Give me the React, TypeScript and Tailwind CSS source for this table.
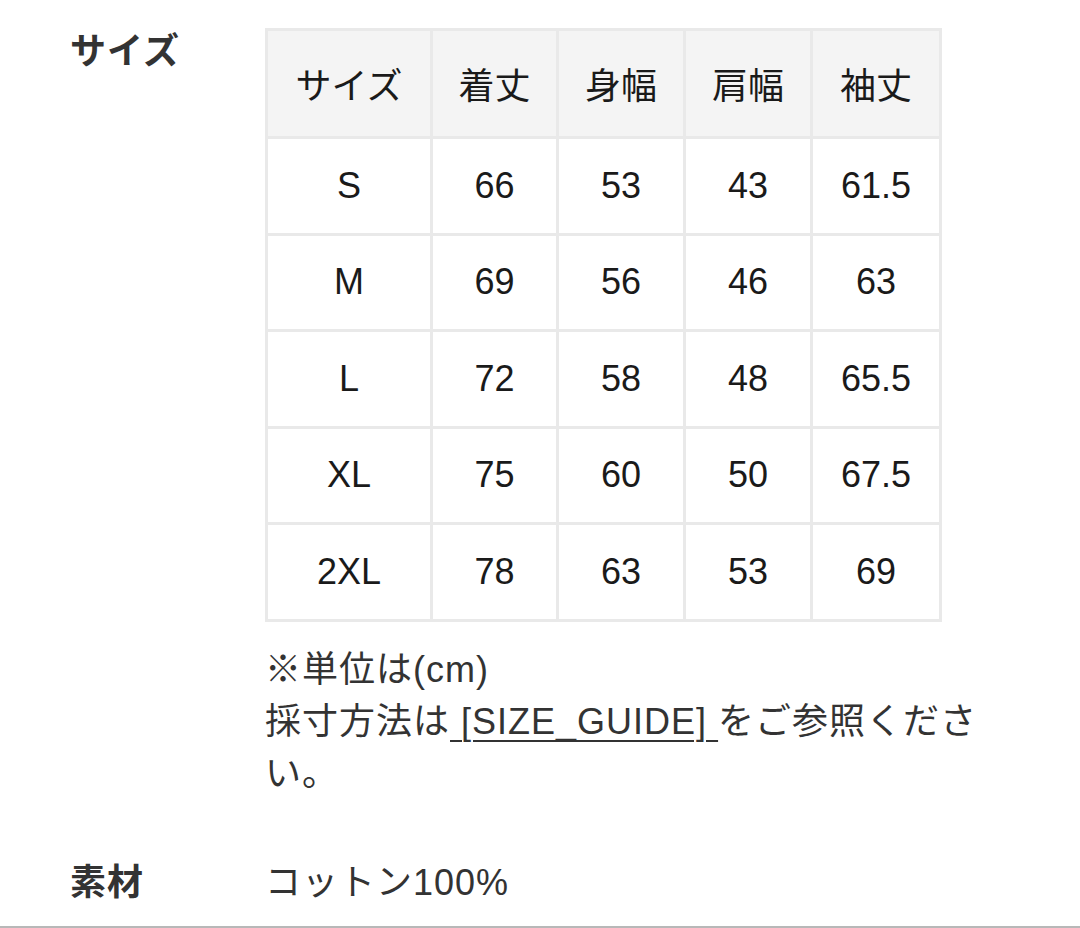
import React from "react";

const headers = ["サイズ", "着丈", "身幅", "肩幅", "袖丈"];
const rows = [
  ["S", "66", "53", "43", "61.5"],
  ["M", "69", "56", "46", "63"],
  ["L", "72", "58", "48", "65.5"],
  ["XL", "75", "60", "50", "67.5"],
  ["2XL", "78", "63", "53", "69"],
];
const widths = ["w-[165px]", "w-[126px]", "w-[127px]", "w-[127px]", "w-[129px]"];

export default function App() {
  return (
    <div
      className="w-[1080px] h-[928px] bg-white overflow-hidden flex flex-col"
      style={{ fontFamily: '"Liberation Sans", "Noto Sans CJK JP", sans-serif' }}
    >
      <div className="flex pt-[28px] pl-[70px]">
        <div className="w-[195px] shrink-0 text-[36px] leading-[48px] font-bold text-[#333] tracking-[1px]">サイズ</div>
        <div className="flex flex-col">
          <table className="table-fixed border-collapse w-[674px] text-[36px] text-[#1a1a1a]">
            <colgroup>
              {widths.map((w, i) => (
                <col key={i} className={w} />
              ))}
            </colgroup>
            <thead>
              <tr className="h-[108px] bg-[#f4f4f4]">
                {headers.map((h) => (
                  <th key={h} className="border-[3px] border-[#e9e9e9] font-normal text-center align-middle pt-[6px]">
                    {h}
                  </th>
                ))}
              </tr>
            </thead>
            <tbody>
              {rows.map((r, ri) => (
                <tr key={ri} className="h-[96.5px]">
                  {r.map((c, ci) => (
                    <td key={ci} className="border-[3px] border-[#e9e9e9] text-center align-middle">
                      {c}
                    </td>
                  ))}
                </tr>
              ))}
            </tbody>
          </table>
          <div className="mt-[22px] w-[720px] text-[36px] leading-[52px] text-[#333] tracking-[1px]">
            <div>※単位は(cm)</div>
            <div className="flex whitespace-nowrap">
              <span>採寸方法は</span>
              <span className="underline underline-offset-[6px] decoration-[2px]">&nbsp;[SIZE_GUIDE]&nbsp;</span>
              <span>をご参照くださ</span>
            </div>
            <div>い。</div>
          </div>
        </div>
      </div>
      <div className="flex pl-[70px] mt-[57px]">
        <div className="w-[195px] shrink-0 text-[36px] leading-[52px] font-bold text-[#333] tracking-[1px]">素材</div>
        <div className="text-[36px] leading-[52px] text-[#333] tracking-[1px]">コットン100%</div>
      </div>
      <div className="mt-auto h-[2px] bg-[#b8b8b8]" />
    </div>
  );
}
